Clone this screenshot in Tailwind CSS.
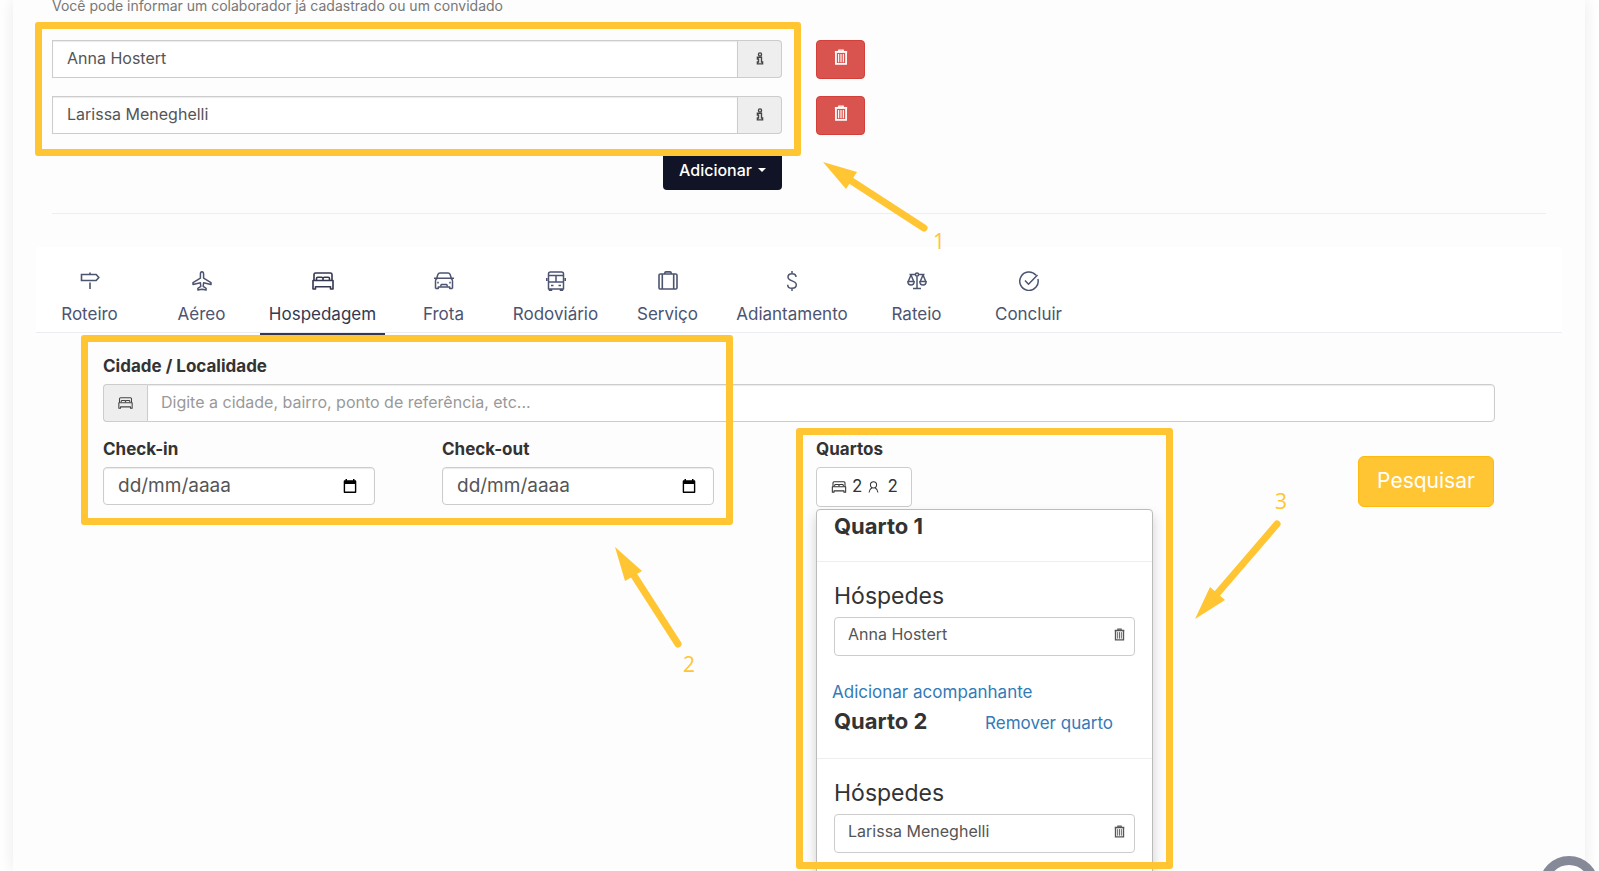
<!DOCTYPE html>
<html lang="pt-BR">
<head>
  <meta charset="UTF-8">
  <meta name="viewport" content="width=device-width, initial-scale=1.0">
  <title>Solicitação de viagem - Hospedagem</title>
  <script src="https://cdn.jsdelivr.net/npm/@tailwindcss/browser@4"></script>
</head>
<body class="bg-white font-['Inter','Open_Sans',sans-serif] text-base text-[#333]">

  <!-- Ícones -->
  <svg class="hidden" aria-hidden="true">
    <symbol id="i-trash" viewBox="0 0 16 18" fill="none" stroke="currentColor">
      <path d="M5.5 3V1.2h5V3" stroke-width="1.5"/>
      <path d="M1 3.2h14" stroke-width="2.2"/>
      <path d="M2.2 4v12.8h11.6V4" stroke-width="2"/>
      <path d="M5.3 5.5v9.5M8 5.5v9.5M10.7 5.5v9.5" stroke-width="1.3"/>
    </symbol>
    <symbol id="i-info" viewBox="0 0 8 14" fill="none" stroke="currentColor" stroke-width="1.5">
      <circle cx="4" cy="2.6" r="1.7"/>
      <path d="M1.2 5.6h4.4v5.2h1.2v2H1.2v-2h1.2V7.6H1.2z"/>
    </symbol>
    <symbol id="i-sign" viewBox="0 0 20 20" fill="none" stroke="currentColor" stroke-width="1.6">
      <path d="M1.5 3.5h14.7l2.6 3-2.6 3H1.5zM10 1.5v2M10 11.500V18"/>
    </symbol>
    <symbol id="i-plane" viewBox="0 0 20 20" fill="none" stroke="currentColor" stroke-width="1.5" stroke-linejoin="round">
      <path d="M10 .8c-1 0-1.600 1-1.600 2.400v4L1 11.600v2l7.400-1.800.4 3.600-2.900 2v1.600l4.100-.8 4.100.8v-1.600l-2.900-2 .4-3.600 7.400 1.800v-2l-7.400-4.400v-4C11.600 1.800 11 .8 10 .8z"/>
    </symbol>
    <symbol id="i-bed" viewBox="0 0 22 18" fill="none" stroke="currentColor" stroke-width="1.6" stroke-linejoin="round">
      <path d="M2 8.500V2.500C2 1.500 2.600 1 3.600 1h14.800c1 0 1.600.5 1.600 1.500v6"/>
      <path d="M1 17V8.500h20V17h-2.500v-2.200h-15V17z"/>
      <path d="M4.500 8V6.600c0-.9.500-1.400 1.300-1.400h3.700c.8 0 1.500.6 1.500 1.400V8M11 8V6.600c0-.8.700-1.400 1.500-1.400h3.700c.8 0 1.300.5 1.300 1.400V8"/>
    </symbol>
    <symbol id="i-car" viewBox="0 0 20 18" fill="none" stroke="currentColor" stroke-width="1.500" stroke-linejoin="round">
      <path d="M2.300 7.200 4 2.300C4.300 1.400 5 1 6 1h8c1 0 1.700.4 2 1.300l1.700 4.900M0 6.200h20"/>
      <path d="M1.500 16.500V9c0-1.600.6-2.500 1.800-2.800M18.500 16.500V9c0-1.600-.6-2.500-1.800-2.800M1.500 16.500h2.800V15h11.400v1.500h2.800"/>
      <path d="M4 9.800v1.800M16 9.800v1.800M6.500 14.500l.8-2h5.400l.8 2"/>
    </symbol>
    <symbol id="i-bus" viewBox="0 0 20 20" fill="none" stroke="currentColor" stroke-width="1.500" stroke-linejoin="round">
      <path d="M2.500 18V3c0-1.200.8-2 2-2h11c1.200 0 2 .8 2 2v15zM2.500 4.500h15M2.500 11h15M10 4.500V11M.7 7v3M19.300 7v3M5 14.500h2.500M12.500 14.500H15M3.500 18v1.500h2V18M14.500 18v1.500h2V18"/>
    </symbol>
    <symbol id="i-case" viewBox="0 0 20 20" fill="none" stroke="currentColor" stroke-width="1.600" stroke-linejoin="round">
      <rect x="1" y="3" width="18" height="15" rx="1.300"/>
      <path d="M4.300 3v15M15.700 3v15M6.800 3V2.100c0-.7.500-1.200 1.200-1.200h4c.7 0 1.200.5 1.200 1.200V3"/>
    </symbol>
    <symbol id="i-money" viewBox="0 0 20 20" fill="none" stroke="currentColor" stroke-width="1.500">
      <path d="M14 6c0-2-1.600-3.300-4-3.300S6 4 6 6c0 4.800 8.300 3 8.300 7.800 0 2-1.700 3.500-4.300 3.500s-4.300-1.400-4.300-3.600M10 0v2.700M10 17.300V20"/>
    </symbol>
    <symbol id="i-scale" viewBox="0 0 20 20" fill="none" stroke="currentColor" stroke-width="1.500" stroke-linejoin="round">
      <path d="M2.500 3.500h5.800M11.700 3.500h5.800M10 5.200v12M6 17.500h8"/>
      <circle cx="10" cy="3.500" r="1.600"/>
      <path d="M4 4 1.200 10.500M4 4l2.800 6.500M16 4l-2.800 6.500M16 4l2.800 6.500M.8 10.500c.1 2.300 1.400 3.500 3.200 3.500s3.100-1.200 3.200-3.500zM12.800 10.500c.1 2.300 1.400 3.500 3.200 3.500s3.100-1.200 3.200-3.500z"/>
    </symbol>
    <symbol id="i-check" viewBox="0 0 20 20" fill="none" stroke="currentColor" stroke-width="1.500">
      <path d="M17 4.300A9.200 9.200 0 1 0 18.900 8"/>
      <path d="m6 9.500 3.500 3.700L18.500 4"/>
    </symbol>
    <symbol id="i-user" viewBox="0 0 12 14" fill="none" stroke="currentColor" stroke-width="1.200">
      <circle cx="6" cy="4.500" r="3.600"/>
      <path d="M.8 13.500c.3-3 1.600-4.700 3.400-5.600M11.200 13.500c-.3-3-1.600-4.700-3.400-5.600"/>
    </symbol>
    <symbol id="i-calendar" viewBox="0 0 14 16">
      <path fill="currentColor" fill-rule="evenodd" d="M2.500 1H4v1.300h6V1h1.500v1.300h.7c.7 0 1.100.4 1.100 1.100v10.500c0 .7-.4 1.100-1.100 1.100H1.800c-.7 0-1.100-.4-1.100-1.100V3.400c0-.7.4-1.100 1.100-1.100h.7zM2.100 6v7.600h9.800V6z"/>
    </symbol>
  </svg>

  <div class="relative min-h-screen overflow-hidden">
    <main class="mr-[14px] ml-[13px] min-h-screen bg-[#fdfdfd] px-[23px] shadow-[0_0_16px_rgba(0,0,0,0.09)]">

      <!-- Viajantes -->
      <section class="px-4">
        <p class="h-10 text-[14px] leading-[12px] text-[#777]">Você pode informar um colaborador já cadastrado ou um convidado</p>
        <div class="flex flex-col gap-[17px]">
          <div class="flex h-[39px] items-start gap-[34px]">
            <div class="flex h-[38px] w-[730px]">
              <input type="text" aria-label="Viajante 1" value="Anna Hostert" class="min-w-0 flex-1 border border-[#ccc] bg-white px-[14px] pb-[2px] text-[#555] shadow-[inset_0_1px_1px_rgba(0,0,0,0.08)]">
              <span class="flex w-11 items-center justify-center rounded-r border border-l-0 border-[#ccc] bg-[#eee] pb-[2px] text-[#444]">
                <svg class="h-[13px] w-[8px]"><use href="#i-info"/></svg>
              </span>
            </div>
            <button aria-label="Remover Anna Hostert" class="flex h-[39px] w-[49px] items-center justify-center rounded border border-[#d43f3a] bg-[#d9534f] pb-[6px] text-white">
              <svg class="h-[16px] w-[14px]"><use href="#i-trash"/></svg>
            </button>
          </div>
          <div class="flex h-[39px] items-start gap-[34px]">
            <div class="flex h-[38px] w-[730px]">
              <input type="text" aria-label="Viajante 2" value="Larissa Meneghelli" class="min-w-0 flex-1 border border-[#ccc] bg-white px-[14px] pb-[2px] text-[#555] shadow-[inset_0_1px_1px_rgba(0,0,0,0.08)]">
              <span class="flex w-11 items-center justify-center rounded-r border border-l-0 border-[#ccc] bg-[#eee] pb-[2px] text-[#444]">
                <svg class="h-[13px] w-[8px]"><use href="#i-info"/></svg>
              </span>
            </div>
            <button aria-label="Remover Larissa Meneghelli" class="flex h-[39px] w-[49px] items-center justify-center rounded border border-[#d43f3a] bg-[#d9534f] pb-[6px] text-white">
              <svg class="h-[16px] w-[14px]"><use href="#i-trash"/></svg>
            </button>
          </div>
          <div class="flex w-[730px] justify-end">
            <button class="flex h-[38px] w-[119px] items-center justify-center gap-[6px] rounded bg-[#101426] pb-[2px] font-medium text-white">
              Adicionar
              <span class="border-x-4 border-t-4 border-x-transparent border-t-white"></span>
            </button>
          </div>
        </div>
        <hr class="mt-[23px] border-[#eee]">
      </section>

      <!-- Abas -->
      <nav class="mt-[33px] flex h-[86px] gap-[5px] border-b border-[#ebedf2] bg-white text-[17px] leading-6 text-[#4c5470]">
        <a href="#" class="flex h-[88px] w-[107px] flex-col items-center gap-[11px] pt-6"><svg class="size-5"><use href="#i-sign"/></svg>Roteiro</a>
        <a href="#" class="flex h-[88px] w-[107px] flex-col items-center gap-[11px] pt-6"><svg class="size-5"><use href="#i-plane"/></svg>Aéreo</a>
        <a href="#" class="flex h-[88px] w-[125px] flex-col items-center gap-[11px] border-b-2 border-[#343851] pt-6 text-[#343851]"><svg class="h-5 w-[22px]"><use href="#i-bed"/></svg>Hospedagem</a>
        <a href="#" class="flex h-[88px] w-[107px] flex-col items-center gap-[11px] pt-6"><svg class="size-5"><use href="#i-car"/></svg>Frota</a>
        <a href="#" class="flex h-[88px] w-[107px] flex-col items-center gap-[11px] pt-6"><svg class="size-5"><use href="#i-bus"/></svg>Rodoviário</a>
        <a href="#" class="flex h-[88px] w-[107px] flex-col items-center gap-[11px] pt-6"><svg class="size-5"><use href="#i-case"/></svg>Serviço</a>
        <a href="#" class="flex h-[88px] w-[132px] flex-col items-center gap-[11px] pt-6"><svg class="size-5"><use href="#i-money"/></svg>Adiantamento</a>
        <a href="#" class="flex h-[88px] w-[107px] flex-col items-center gap-[11px] pt-6"><svg class="size-5"><use href="#i-scale"/></svg>Rateio</a>
        <a href="#" class="flex h-[88px] w-[107px] flex-col items-center gap-[11px] pt-6"><svg class="size-5"><use href="#i-check"/></svg>Concluir</a>
      </nav>

      <!-- Busca de hospedagem -->
      <form class="px-[67px] pt-[21px]">
        <label for="cidade" class="mb-[6px] block text-[17px] leading-6 font-bold">Cidade / Localidade</label>
        <div class="flex h-[38px]">
          <span class="flex w-11 items-center justify-center rounded-l border border-r-0 border-[#ccc] bg-[#eee] text-[#444]">
            <svg class="h-[12px] w-[15px]" stroke-width="2"><use href="#i-bed"/></svg>
          </span>
          <input id="cidade" type="text" placeholder="Digite a cidade, bairro, ponto de referência, etc..." class="min-w-0 flex-1 rounded-r border border-[#ccc] bg-white px-[13px] pb-[2px] shadow-[inset_0_1px_1px_rgba(0,0,0,0.08)] placeholder:text-[#999]">
        </div>

        <div class="mt-[15px] grid grid-cols-[339fr_374fr_542fr_137fr] items-start">
          <div>
            <label for="checkin" class="mb-[6px] block text-[17px] leading-6 font-bold">Check-in</label>
            <div class="flex h-[38px] w-[272px] items-center rounded border border-[#ccc] bg-white px-[14px] shadow-[inset_0_1px_1px_rgba(0,0,0,0.08)]">
              <input id="checkin" type="text" placeholder="dd/mm/aaaa" class="min-w-0 flex-1 text-[19px] leading-6 outline-none placeholder:text-[#555]">
              <button type="button" aria-label="Abrir calendário" class="px-[3px] text-black"><svg class="h-4 w-[14px]"><use href="#i-calendar"/></svg></button>
            </div>
          </div>
          <div>
            <label for="checkout" class="mb-[6px] block text-[17px] leading-6 font-bold">Check-out</label>
            <div class="flex h-[38px] w-[272px] items-center rounded border border-[#ccc] bg-white px-[14px] shadow-[inset_0_1px_1px_rgba(0,0,0,0.08)]">
              <input id="checkout" type="text" placeholder="dd/mm/aaaa" class="min-w-0 flex-1 text-[19px] leading-6 outline-none placeholder:text-[#555]">
              <button type="button" aria-label="Abrir calendário" class="px-[3px] text-black"><svg class="h-4 w-[14px]"><use href="#i-calendar"/></svg></button>
            </div>
          </div>

          <div class="relative">
            <label for="quartos" class="mb-[6px] block text-[17px] leading-6 font-bold">Quartos</label>
            <button id="quartos" type="button" class="flex h-10 w-24 items-center rounded border border-[#ccc] bg-white pl-[14px] text-[17px]">
              <svg class="mr-[5px] h-[12px] w-[16px]"><use href="#i-bed"/></svg>2
              <svg class="mr-2 ml-[6px] h-[12px] w-[11px]"><use href="#i-user"/></svg>2
            </button>

            <div class="absolute top-full left-0 z-10 mt-[2px] w-[337px] rounded border border-[#bbb] bg-white pb-16 shadow-[0_6px_12px_rgba(0,0,0,0.18)]">
              <div class="h-[52px] border-b border-[#eee] px-[17px]">
                <h3 class="text-[22px] leading-8 font-bold">Quarto 1</h3>
              </div>
              <div class="px-[17px] pt-[18px]">
                <h4 class="mb-[5px] text-[23px] leading-8">Hóspedes</h4>
                <div class="flex h-[39px] items-center justify-between rounded border border-[#ccc] pr-[9px] pb-[5px] pl-[13px] text-[#555]">
                  Anna Hostert
                  <button type="button" aria-label="Remover hóspede"><svg class="h-[13px] w-[11px]"><use href="#i-trash"/></svg></button>
                </div>
              </div>
              <div class="mt-[23px] px-[15px]">
                <a href="#" class="block text-[17px] leading-[26px] text-[#337ab7]">Adicionar acompanhante</a>
              </div>

              <div class="flex h-[54px] items-start justify-between border-b border-[#eee] pr-[39px] pl-[17px]">
                <h3 class="text-[22px] leading-8 font-bold">Quarto 2</h3>
                <a href="#" class="text-[17px] leading-9 text-[#337ab7]">Remover quarto</a>
              </div>
              <div class="px-[17px] pt-[18px]">
                <h4 class="mb-[5px] text-[23px] leading-8">Hóspedes</h4>
                <div class="flex h-[39px] items-center justify-between rounded border border-[#ccc] pr-[9px] pb-[5px] pl-[13px] text-[#555]">
                  Larissa Meneghelli
                  <button type="button" aria-label="Remover hóspede"><svg class="h-[13px] w-[11px]"><use href="#i-trash"/></svg></button>
                </div>
              </div>
            </div>
          </div>

          <button type="submit" class="mr-px h-[51px] self-end rounded-md border border-[#ffb90f] bg-[#ffc533] pb-[2px] text-[21px] text-white">Pesquisar</button>
        </div>
      </form>
    </main>

    <!-- Marcações do tutorial -->
    <div class="pointer-events-none absolute inset-0 z-20 font-['Open_Sans',sans-serif] text-[21px] leading-6 text-[#ffc533]">
      <div class="absolute top-[22px] left-[35px] h-[134px] w-[766px] rounded-[3px] border-[7px] border-[#ffc533]"></div>
      <div class="absolute top-[335px] left-[81px] h-[190px] w-[652px] rounded-[3px] border-[7px] border-[#ffc533]"></div>
      <div class="absolute top-[428px] left-[796px] h-[441px] w-[377px] rounded-[3px] border-[7px] border-[#ffc533]"></div>
      <svg class="absolute top-0 left-0 h-[700px] w-[1400px]" fill="#ffc533" stroke="#ffc533">
        <g stroke="none">
          <path d="M823 162 857 172 846 189z"/>
          <path d="M615 547 642 571 625 581z"/>
          <path d="M1195 619 1210 587 1225 600z"/>
        </g>
        <path d="M850 180 924 228M633 574 678 644M1216 595 1277 524" stroke-width="7" stroke-linecap="round"/>
      </svg>
      <span class="absolute top-[229px] left-[933px]">1</span>
      <span class="absolute top-[652px] left-[683px]">2</span>
      <span class="absolute top-[489px] left-[1275px]">3</span>
    </div>
  </div>

  <button aria-label="Ajuda" class="fixed right-0 -bottom-[45px] z-30 size-[60px] rounded-full border-[9px] border-[#868997] bg-white"></button>
</body>
</html>
